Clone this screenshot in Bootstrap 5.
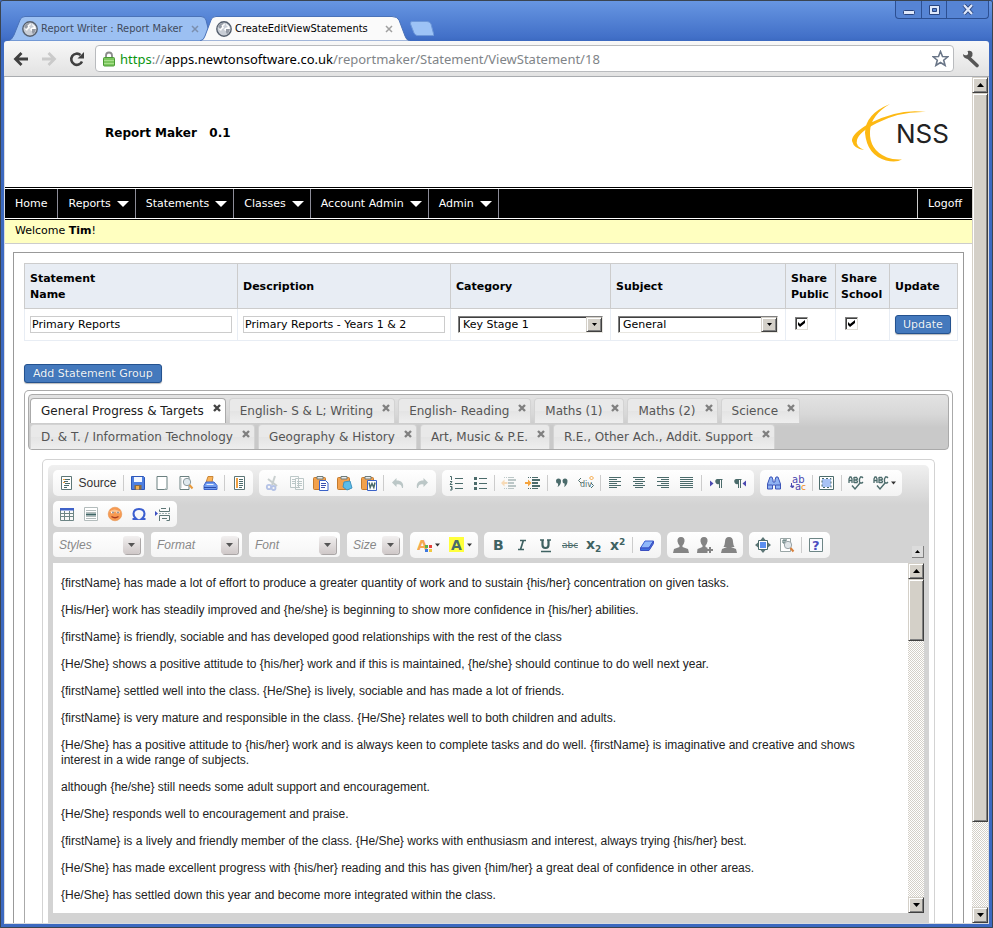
<!DOCTYPE html>
<html lang="en">
<head>
<meta charset="utf-8">
<meta name="viewport" content="width=device-width, initial-scale=1">
<title>CreateEditViewStatements</title>
<link href="https://cdn.jsdelivr.net/npm/bootstrap@5.3.0/dist/css/bootstrap.min.css" rel="stylesheet">
<style>
:root{--ui:"DejaVu Sans",Verdana,sans-serif;--narrow:"DejaVu Sans Condensed",Tahoma,sans-serif;--face:#d4d0c8}
body{font-family:var(--ui);font-size:11px;line-height:16px;color:#000;background:#3f6bc2}
button{color:inherit}
button svg{flex:none}
.win{border:1px solid #3a4450;border-radius:3px 3px 0 0}
.win-in{background:linear-gradient(#6796e2 0,#4270c8 36px,#3c69c0 40px);padding:0 3px 3px}
.titlebar{height:40px;padding:0 0 0 4px;flex:none}
.btab{position:relative;height:25px;border:0;background:none;font-family:var(--narrow);font-size:11px;line-height:16px;padding:0 9px 0 14px;text-align:left;gap:3px}
.btab svg.shape{position:absolute;inset:0;width:100%;height:100%}
.btab>:not(.shape){position:relative}
.btab-a{width:200px;color:#3f4a5c}
.btab-b{width:210px;margin-left:-8px;padding-left:16px;z-index:1}
.btab-t{white-space:nowrap}
.newtab{border:0;background:none;padding:0;margin-bottom:5px;line-height:0}
.winbtns{height:18px;border:1px solid #2c4f92;border-top:0;border-radius:0 0 4px 4px;overflow:hidden;background:#5684d4}
.winbtns button{border:0;border-left:1px solid #2c4f92;background:none;width:25px;padding:0;line-height:0}
.winbtns button:first-child{border-left:0}
.winbtns button:last-child{width:42px}
.navrow{height:36px;background:linear-gradient(#f8f8f8,#e2e2e2);border-bottom:1px solid #a9acb0;border-radius:3px 3px 0 0;padding:0 9px 0 3px}
.navrow button{border:0;background:none;padding:0;line-height:0;width:28px}
.omni{height:27px;background:#fff;border:1px solid #b9bbbe;border-radius:4px;padding:0 4px 0 6px;margin:0 8px 0 4px}
.url{font-family:"Noto Sans","Open Sans",sans-serif;font-size:13px;line-height:20px;color:#808488;text-decoration:none;white-space:nowrap}
.url b{font-weight:400;color:#0a9510}.url i{font-style:normal;color:#000}
.view{border:1px solid #d8dbe0;border-top:0;background:#fff;min-height:0}
.pane{min-width:0;overflow:hidden}
.sbar{width:16px;flex:none;background:repeating-conic-gradient(#d4d0c8 0 25%,#fff 0 50%) 0 0/2px 2px}
.raised{background:var(--face);border:1px solid;border-color:#d4d0c8 #404040 #404040 #d4d0c8;box-shadow:inset 1px 1px #fff,inset -1px -1px #808080}
.sbar button{height:16px;width:16px;padding:0;line-height:0;flex:none}
.thumb-lg{flex:729 1 0}.rest-lg{flex:85 1 0}
.thumb-sm{flex:60 1 0}.rest-sm{flex:258 1 0}
.mast{height:110px;padding:2px 20px 0 100px}
.mast h1{font-size:12px;line-height:16px;font-weight:700;margin:0}
.mast .brand{font-family:Inter,"DejaVu Sans",sans-serif;font-size:26px;font-weight:400}
.menu{border-top:1px solid #000;border-bottom:1px solid #000;padding:1px 0}
.menu-in{background:#000}
.menu a{color:#fff;text-decoration:none;padding:7px 10px 6px;height:29px;gap:6px;border-right:1px solid #8c8c98}
.menu a.drop{padding-right:6px}
.menu a.off{border-right:0;border-left:1px solid #ccc}
.hello{background:#ffffc0;border-bottom:1px solid #ccc;height:24px;padding:3px 10px}
.panel-main{border:1px solid #999;margin:8px 8px 0;padding:10px 8px 0 10px}
.grid-t{table-layout:fixed;width:100%;border-collapse:collapse}
.w-name{width:213px}.w-cat{width:160px}.w-subj{width:175px}.w-pub{width:50px}.w-sch{width:54px}.w-upd{width:68px}
.grid-t th{background:#e8edf4;border:1px solid #ccc;padding:7px 5px 5px;height:45px;vertical-align:middle;font-weight:700}
.grid-t td{border:1px solid #e8edf4;padding:6px 5px;height:32px;vertical-align:top}
.grid-t td.pick{padding:7px}
.txt{width:100%;height:17px;border:1px solid #ccc;padding:0 1px;font-size:11px;line-height:15px;display:block;color:#000;margin-top:1px}
.sel{position:relative;height:17px;border:1px solid;border-color:#808080 #e8e6e0 #e8e6e0 #808080;box-shadow:inset 1px 1px #404040}
.sel select{appearance:none;border:0;background:none;width:100%;height:15px;padding:0 18px 0 4px;font-size:11px;line-height:15px;display:block;outline:0}
.sel .raised{position:absolute;right:0;top:0;width:16px;height:15px;pointer-events:none;line-height:0}
.chk{appearance:none;display:block;width:13px;height:13px;margin:2px 0 0 4px;border:1px solid;border-color:#808080 #e0ddd6 #e0ddd6 #808080;box-shadow:inset 1px 1px #404040;background:#fff}
.chk:checked::before{content:"";display:block;width:7px;height:7px;margin:2px;background:#000;clip-path:polygon(0 28%,0 70%,29% 100%,100% 42%,100% 0,29% 58%)}
.cmd{background:#4479bd;border:1px solid #24528f;border-radius:3px;color:#eef4fb;font-size:11px;line-height:16px;padding:1px 7px;height:19px;box-shadow:0 1px 1px #bbb;text-shadow:0 0 1px #29558c;display:flex;align-items:center}
.cmd.add{margin-top:23px;padding:1px 8px}
.group-box{border:1px solid #aaa;border-radius:5px;margin-right:2px;padding:3px 3px 0;border-bottom:0;margin-top:7px}
.strip{border:1px solid #aaa;border-radius:4px;background:linear-gradient(#e2e2e2,#d8d8d8 35%,#c9c9c9 60%);padding:2px 1px 0}
.strip .rw{gap:3px;height:26px}
.tabx{height:25px;margin-top:1px;border:1px solid #d3d3d3;border-bottom:0;border-radius:4px 4px 0 0;background:linear-gradient(#e9e9e9 50%,#e4e4e4 50%,#eee);color:#555;font-size:12px}
.tabx a{color:inherit;text-decoration:none;padding:4px 0 0 10px;line-height:16px;white-space:nowrap}
.tabx button{border:0;background:none;padding:5px 4px 0 9px;line-height:0;color:#808080;align-self:flex-start}
.tabx.on{background:#fff;border-color:#aaa;color:#212121}.tabx.on button{color:#444}
.ed-out{border:1px solid #d3d3d3;border-radius:5px;margin:9px 14px 0;padding:5px;border-bottom:0}
.ed{background:linear-gradient(#f0f0f0,#d3d3d3 40px);border-radius:5px 5px 0 0;padding:5px 5px 20px}
.tools{gap:5px;margin-bottom:5px}
.tools .rw{gap:6px}
.tg{background:linear-gradient(#fff,#f3f3f3);border-radius:5px;padding:2px;height:26px}
.tg button{border:0;background:none;padding:0;height:22px;width:24px;display:flex;align-items:center;justify-content:center;font-family:"Liberation Sans",Arial,sans-serif;font-size:12px;line-height:16px;color:#333;gap:3px}
.tg button.wd{width:32px;gap:2px}
.tg button.src{width:66px}
.tg button:disabled{opacity:.35}
.sp{width:1px;height:16px;margin:0 2px;background:#ccc;align-self:center;flex:none}
.combo{height:25px;width:91px;border-radius:4px;border:0;background:linear-gradient(#fff,#f5f5f5);padding:0 4px 0 6px;font:italic 12px/16px "Liberation Sans",Arial,sans-serif;color:#888;margin-right:1px}
.combo.sz{width:56px}
.combo span{background:linear-gradient(#f2f0f0,#cfc8c8);border-radius:3px;width:17px;height:18px;box-shadow:1px 1px #aaa6a6}
.collapse-b{width:12px;height:12px;padding:0;border:0;border-right:1px solid #808080;border-bottom:1px solid #808080;background:#dcdcdc;line-height:0}
.doc{height:350px;background:#fff}
.doc-t{font:12px/15px "Liberation Sans",Arial,sans-serif;color:#222;padding:13px 20px 0 8px;overflow:hidden;outline:0}
.doc-t p{margin:0 0 12px}
svg text{font-family:var(--ui)}
</style>
<script src="https://cdn.jsdelivr.net/npm/bootstrap@5.3.0/dist/js/bootstrap.bundle.min.js"></script>
</head>
<body>
<svg width="0" height="0" class="position-absolute" aria-hidden="true">
<defs>
<g id="up"><path d="M3.500 0L7 4H0z" fill="#000"/></g>
<symbol id="globe" viewBox="0 0 16 16"><circle cx="8" cy="8" r="7.200" fill="#c9ced6" stroke="#56606e" stroke-width="1.400"/><path d="M2 6C3 3 5 1.500 8 2L9 4 7 5 8 7 6 8 5 10 3 8zM10 3l3 2 1 3-1 3-2 1-1-2-2-1 1-2 3-1-2-2z" fill="#fff"/><path d="M2 6C3 3 5 1.500 8 2L7 3.500 5.500 4 6 6 4 8zM10 8l4 0-1 3-2 2-1-2z" fill="#5c6675" opacity=".65"/></symbol>
<symbol id="page" viewBox="0 0 16 16"><path d="M3 1.500h10v13H3z" fill="#fff" stroke="#6b8080"/><path d="M10 14.500h3v-3z" fill="#b9c4c4"/></symbol>
<symbol id="source" viewBox="0 0 16 16"><path d="M2.500 1.500h10v13h-10z" fill="#fff" stroke="#5d7676"/><path d="M4 4.500h2M4 7.500h2" stroke="#f0a040"/><path d="M6 4.500h5M5 6.500h4M6 8.500h5M5 10.500h5M5 12.500h3" stroke="#4b6b6b"/></symbol>
<symbol id="save" viewBox="0 0 16 16"><path d="M1.500 1.500h12l1 1v12h-13z" fill="#4e7fe0" stroke="#2e57b8"/><path d="M4 2h8v5H4z" fill="#f4f8ff"/><path d="M4.500 10h7v4.500h-7z" fill="#8a6b40"/><path d="M6 11h3v3.500H6z" fill="#f3b050"/></symbol>
<symbol id="preview" viewBox="0 0 16 16"><path d="M2 1.500h9v13H2z" fill="#fff" stroke="#6b8080"/><path d="M3 3v10" stroke="#b8c2c2"/><circle cx="9" cy="7" r="3.700" fill="#dfe9ee" stroke="#8c9a9e"/><path d="M11.500 10l3 3.500" stroke="#e89a3c" stroke-width="2"/></symbol>
<symbol id="print" viewBox="0 0 16 16"><path d="M6 1.500h5l-1 6H4z" fill="#f9b35a" stroke="#c98636"/><path d="M4 7h8l3 3.500v4H2v-4z" fill="#6f9bf0" stroke="#3c62c8"/><path d="M2 12.500h12" stroke="#2b4ba8"/><path d="M4.500 9.500h7" stroke="#e8f0ff"/></symbol>
<symbol id="templates" viewBox="0 0 16 16"><path d="M3.500 1.500h10v13h-10z" fill="#fff" stroke="#5d7676"/><path d="M5 3h2v10H5z" fill="#f0a040"/><path d="M8 4.500h4M8 6.500h4M8 8.500h4M8 10.500h4M8 12.500h3" stroke="#4b6b6b"/></symbol>
<symbol id="cut" viewBox="0 0 16 16"><path d="M10 1L7 10M3 4l9 7" stroke="#6e8080" stroke-width="2" fill="none"/><circle cx="4" cy="12" r="2.200" fill="none" stroke="#3a62c8" stroke-width="1.800"/><circle cx="8.500" cy="13" r="2" fill="none" stroke="#3a62c8" stroke-width="1.800"/></symbol>
<symbol id="copy" viewBox="0 0 16 16"><path d="M1.500 1.500h8v11h-8zM6.500 3.500h8v11h-8z" fill="#fff" stroke="#4b6b6b"/><path d="M3 4.500h3M3 6.500h3M3 8.500h3M8 6.500h5M8 8.500h5M8 10.500h5M8 12.500h3" stroke="#4b6b6b"/></symbol>
<symbol id="clip" viewBox="0 0 16 16"><rect x=".500" y="2.500" width="12" height="12" rx="1" fill="#f3a14c" stroke="#c47a2c"/><path d="M4 1.500h6V4H4z" fill="#e8eaea" stroke="#6e7c7c"/></symbol>
<symbol id="paste" viewBox="0 0 16 16"><use href="#clip"/><path d="M6.500 5.500h6l2.500 2.500v7.500H6.500z" fill="#fff" stroke="#3a62c8"/><path d="M8 8.500h5M8 10.500h5M8 12.500h4" stroke="#3b4fae"/></symbol>
<symbol id="pastet" viewBox="0 0 16 16"><use href="#clip"/><path d="M7 7l6-1 2 7-5 2-4-3z" fill="#5bbce8" stroke="#3f93c0"/></symbol>
<symbol id="pastew" viewBox="0 0 16 16"><use href="#clip"/><path d="M6.500 5.500h9v10h-9z" fill="#fff" stroke="#3a62c8"/><path d="M8 7.500l1.200 5 1.800-4 1.800 4 1.200-5" fill="none" stroke="#4b6b6b" stroke-width="1.500"/></symbol>
<symbol id="undo" viewBox="0 0 16 16"><path d="M6.500 3L2 7.500 6.500 12V9.500c3-.5 5 0 5.500 3.500h1c1-5-1.500-7.500-6.500-7.500z" fill="#4b6b6b"/></symbol>
<symbol id="redo" viewBox="0 0 16 16"><path d="M9.500 3L14 7.500 9.500 12V9.500c-3-.5-5 0-5.500 3.500H3c-1-5 1.500-7.500 6.500-7.500z" fill="#4b6b6b"/></symbol>
<symbol id="ol" viewBox="0 0 16 16"><path d="M7 3.500h8M7 8.500h8M7 13.500h8M2 1.500h1.500V5M2 6.500h2L2 9.500h2.500M2 11.500h2v1.500H3h1v2H2" fill="none" stroke="#4b6b6b"/></symbol>
<symbol id="ul" viewBox="0 0 16 16"><path d="M7 3.500h8M7 8.500h8M7 13.500h8" stroke="#4b6b6b"/><path d="M2 2h3v3H2zM2 7h3v3H2zM2 12h3v3H2z" fill="#4b6b6b"/></symbol>
<symbol id="indent" viewBox="0 0 16 16"><path d="M3 2.500h5M3 13.500h5" stroke="#4b6b6b" stroke-dasharray="1 1"/><path d="M8 2.500h5M8 13.500h5" stroke="#4b6b6b"/><path d="M7 5h8M7 8h6M7 11h8" stroke="#4b6b6b" stroke-width="2"/><path d="M0 7h3V4.500L6.500 8 3 11.500V9H0z" fill="#f5a33c"/></symbol>
<symbol id="outdent" viewBox="0 0 16 16"><path d="M3 2.500h5M3 13.500h5" stroke="#4b6b6b" stroke-dasharray="1 1"/><path d="M8 2.500h5M8 13.500h5" stroke="#4b6b6b"/><path d="M7 5h8M7 8h6M7 11h8" stroke="#4b6b6b" stroke-width="2"/><path d="M6.500 7h-3V4.500L0 8l3.500 3.500V9h3z" fill="#f5a33c"/></symbol>
<symbol id="quote" viewBox="0 0 16 16"><path d="M2 6a2.500 2.500 0 1 1 5 0q0 4-3.500 6 1-2 .5-3.500Q2 8.500 2 6zM8.500 6a2.500 2.500 0 1 1 5 0q0 4-3.500 6 1-2 .5-3.500-2 0-2-2.500z" fill="#4b6b6b"/></symbol>
<symbol id="divi" viewBox="0 0 16 16"><path d="M3 3L.500 5.500 3 8M13 8l2.500 2.500L13 13" fill="none" stroke="#4b6b6b"/><text x="2" y="12" font-size="8" fill="#4b6b6b">div</text><path d="M13.500 1l2 2-2 2-2-2z" fill="none" stroke="#f5a33c"/></symbol>
<symbol id="al" viewBox="0 0 16 16"><path d="M2 2.500h12M2 4.500h8M2 6.500h12M2 8.500h8M2 10.500h12M2 12.500h8" stroke="#4b6b6b"/></symbol>
<symbol id="ac" viewBox="0 0 16 16"><path d="M2 2.500h12M4 4.500h8M2 6.500h12M4 8.500h8M2 10.500h12M4 12.500h8" stroke="#4b6b6b"/></symbol>
<symbol id="ar" viewBox="0 0 16 16"><path d="M2 2.500h12M6 4.500h8M2 6.500h12M6 8.500h8M2 10.500h12M6 12.500h8" stroke="#4b6b6b"/></symbol>
<symbol id="aj" viewBox="0 0 16 16"><path d="M1 2.500h13M1 4.500h13M1 6.500h13M1 8.500h13M1 10.500h13M1 12.500h13" stroke="#4b6b6b"/></symbol>
<symbol id="ltr" viewBox="0 0 16 16"><path d="M2 5.500L5.500 8.500 2 11.500z" fill="#4a48b0"/><path d="M9 4h5.500v1H14v8h-1V5h-1v8h-1V9a2.500 2.500 0 0 1-2-5z" fill="#4b6b6b"/></symbol>
<symbol id="rtl" viewBox="0 0 16 16"><path d="M14 5.500L10.500 8.500 14 11.500z" fill="#4a48b0"/><path d="M4 4h5.500v1H9v8H8V5H7v8H6V9a2.500 2.500 0 0 1-2-5z" fill="#4b6b6b"/></symbol>
<symbol id="find" viewBox="0 0 16 16"><path d="M4 2h2l1 3v2h2V5l1-3h2l2.500 7v5H9.500v-4h-3v4h-5V9z" fill="#8fb2f2" stroke="#3c55b8"/><path d="M2 10h4M10 10h4" stroke="#3c55b8"/></symbol>
<symbol id="repl" viewBox="0 0 16 16"><text x="2" y="8" font-size="10" fill="#4a48b0">ab</text><text x="5" y="15" font-size="10" fill="#4a48b0">a</text><text x="11" y="15" font-size="9" fill="#f08a20">c</text><path d="M1.500 8v3M.500 11h3.500L2.500 13z" stroke="#4a48b0" fill="#4a48b0"/></symbol>
<symbol id="selall" viewBox="0 0 16 16"><path d="M.500 1.500h14v13H.5z" fill="#fff" stroke="#4b6b6b"/><path d="M3 4h9v8H3z" fill="#a9c3f5"/><path d="M3 3.500h9v9H3z" fill="none" stroke="#4b6b6b" stroke-dasharray="2 2"/></symbol>
<symbol id="spell" viewBox="0 0 16 16"><path d="M1 8V4l1-2h1l1 2v4M1 5.500h3M6 2v6M6 2.500h2.500L9.500 4 8 5H6m2 0l1.500 1L9 7.500H6M15 3l-1-1h-1.500L11.500 4v3l1 1H14l1-1" fill="none" stroke="#4b6b6b" stroke-width="1.300"/><path d="M4 10.500l3 3.500 5-6" fill="none" stroke="#4b6b6b" stroke-width="1.400"/></symbol>
<symbol id="table" viewBox="0 0 16 16"><path d="M1.500 2.500h13v12h-13zM1 7.500h14M1 10.500h14M5.500 5v9M10.500 5v9" fill="none" stroke="#6d8585"/><path d="M1 2h14v2.500H1z" fill="#3f62c8"/></symbol>
<symbol id="hr" viewBox="0 0 16 16"><path d="M1.500 1.500h13v13h-13z" fill="#fff" stroke="#b3bcbc"/><path d="M3 4.500h10M3 6.500h10M3 10.500h10M3 12.500h10" stroke="#b3bcbc"/><path d="M3 8.500h10" stroke="#3f6464" stroke-width="2"/></symbol>
<symbol id="smile" viewBox="0 0 16 16"><circle cx="8" cy="8" r="6.800" fill="#f79a52" stroke="#e08a40" stroke-width=".500"/><path d="M2 6q5-5 12 0z" fill="#fbc28e"/><path d="M4 6.500h3M9.500 6.500h3" stroke="#fff" stroke-width="1.500"/><path d="M5.500 6.500h1M10.500 6.500h1" stroke="#333" stroke-width="1.500"/><path d="M4.500 10.500q3.500 2.500 7 0" stroke="#a83c20" stroke-width="1.300" fill="none"/></symbol>
<symbol id="omega" viewBox="0 0 16 16"><path d="M1.500 13H5.500Q2.500 11 2.500 7.500 3 3 8 3t5.500 4.500Q13.500 11 10.500 13h4" fill="none" stroke="#3c5fd0" stroke-width="2"/></symbol>
<symbol id="brk" viewBox="0 0 16 16"><path d="M4.500 3.500v2h10v-4M4.500 15V9.500h10v5h-3M6 2.500h5M7 12.500h5" fill="none" stroke="#5d7676"/><path d="M4 7.500h11" stroke="#9fb0b0" stroke-dasharray="2 1"/><path d="M0 5l3 2.500L0 10z" fill="#3c4fc0"/></symbol>
<symbol id="fcol" viewBox="0 0 16 16"><text x="0" y="13" font-size="14" font-weight="700" fill="#f5a850">A</text><path d="M8 8h3v3H8z" fill="#5bb04a"/><path d="M12 8h3v3h-3z" fill="#e8403c"/><path d="M8 12h3v3H8z" fill="#3c78e0"/><path d="M12 12h3v3h-3z" fill="#f0c840"/></symbol>
<symbol id="bcol" viewBox="0 0 16 16"><path d="M0 0h15v15H0z" fill="#ffff3c"/><text x="2" y="13" font-size="14" font-weight="700" fill="#4b6b6b">A</text></symbol>
<symbol id="dn" viewBox="0 0 5 16"><path d="M0 6.500h5L2.500 9.500z" fill="#333"/></symbol>
<symbol id="b" viewBox="0 0 16 16"><text x="3" y="13" font-size="14" font-weight="700" fill="#3f6262">B</text></symbol>
<symbol id="i" viewBox="0 0 16 16"><path d="M6 3.500h6M4 12.500h6M9.500 3L6.500 12.500" fill="none" stroke="#3f6262" stroke-width="1.700"/></symbol>
<symbol id="u" viewBox="0 0 16 16"><path d="M2 3h4M9 3h4" stroke="#3f6262" stroke-width="1.500"/><path d="M4.500 3v5q0 3 3 3t3-3V3" fill="none" stroke="#3f6262" stroke-width="2.200"/><path d="M3 14.500h10" stroke="#3f6262" stroke-width="1.500"/></symbol>
<symbol id="s" viewBox="0 0 16 16"><text x="0" y="11" font-size="9" fill="#4b6b6b">abc</text><path d="M0 8.500h16" stroke="#4b6b6b"/></symbol>
<symbol id="sub" viewBox="0 0 16 16"><text x="0" y="12" font-size="14" font-weight="700" fill="#3f6262">x</text><text x="9" y="15" font-size="9" font-weight="700" fill="#3f6262">2</text></symbol>
<symbol id="sup" viewBox="0 0 16 16"><text x="0" y="13" font-size="14" font-weight="700" fill="#3f6262">x</text><text x="9" y="8" font-size="9" font-weight="700" fill="#3f6262">2</text></symbol>
<symbol id="erase" viewBox="0 0 16 16"><path d="M6 4h8.500L10 11H1.500z" fill="#8fb8fa" stroke="#3c5fd0"/><path d="M1.500 11H10l4.500-7v2.500L10 13.500H1.500z" fill="#3f6fe0" stroke="#3c4fc0"/></symbol>
<symbol id="man" viewBox="0 0 16 16"><path d="M8 0q4 0 3.500 4.500Q11 7 9.500 8.500V10l5.500 2 1 4H0l1-4 5.500-2V8.500Q5 7 4.500 4.500 4 0 8 0z" fill="#848484"/></symbol>
<symbol id="manp" viewBox="0 0 16 16"><path d="M7 0q4 0 3.500 4.500Q10 7 8.500 8.500V10l2 .8V16H0l.5-4L5.500 10V8.500Q4 7 3.500 4.500 3 0 7 0z" fill="#848484"/><path d="M13 10v6M10 13h6" stroke="#848484" stroke-width="2"/></symbol>
<symbol id="woman" viewBox="0 0 16 16"><path d="M8 0q4 0 4 5 .3 3.500 1.500 5H10l5 2 1 4H0l1-4 5-2H2.500Q3.700 8.500 4 5q0-5 4-5z" fill="#848484"/></symbol>
<symbol id="max" viewBox="0 0 16 16"><path d="M3.500 3.500h9v9h-9z" fill="#fff" stroke="#4b6b6b"/><path d="M5 5h6v6H5z" fill="#5a8ff0"/><path d="M8 0l2.500 3h-5zM8 16l2.500-3h-5zM0 8l3-2.500v5zM16 8l-3-2.500v5z" fill="#5d7676"/></symbol>
<symbol id="blocks" viewBox="0 0 16 16"><path d="M1.500 1.500h10v13h-10z" fill="#fff" stroke="#9aa6a6"/><path d="M4 3h4M4 3v3h2M6 3v5" stroke="#4b6b6b" fill="none"/><circle cx="9" cy="8" r="3.700" fill="#dfe5e8" stroke="#9aa4a8"/><path d="M11.500 11l3 3.500" stroke="#d8803c" stroke-width="2"/></symbol>
<symbol id="help" viewBox="0 0 16 16"><path d="M1.500 1.500h13v13h-13z" fill="#f8fbff" stroke="#6d8585"/><text x="4" y="13" font-size="13" font-weight="700" fill="#4a4cc0">?</text></symbol>
<symbol id="x" viewBox="0 0 8 8"><path d="M1 1l6 6M7 1L1 7" stroke="currentColor" stroke-width="2.400"/></symbol>
</defs>
</svg>

<div class="win vh-100 d-flex flex-column overflow-hidden">
<div class="win-in flex-fill d-flex flex-column overflow-hidden">
  <header class="titlebar d-flex justify-content-between align-items-start">
    <div class="d-flex align-items-end h-100">
      <button class="btab btab-a d-flex align-items-center" type="button">
        <svg class="shape" viewBox="0 0 200 25" preserveAspectRatio="none"><path d="M0 25Q4 24 6 19L12 4Q13 .5 17 .5H193Q197 .5 198 4L200 12V25z" fill="#9cc0f2" stroke="#4a72b8"/></svg>
        <svg width="16" height="16"><use href="#globe"/></svg>
        <span class="btab-t flex-fill">Report Writer : Report Maker</span>
        <svg width="8" height="8" fill="none" stroke="#7b8fae" stroke-width="1.500"><path d="M1 1l6 6M7 1L1 7"/></svg>
      </button>
      <button class="btab btab-b d-flex align-items-center" type="button">
        <svg class="shape" viewBox="0 0 210 25" preserveAspectRatio="none"><path d="M0 25Q4 24 5 20L11 4Q12 .5 16 .5H192Q197 .5 199 4L205 20Q206 24 210 25z" fill="#fafafa" stroke="#4a72b8"/></svg>
        <svg width="16" height="16"><use href="#globe"/></svg>
        <span class="btab-t flex-fill">CreateEditViewStatements</span>
        <svg class="me-2" width="8" height="8" fill="none" stroke="#a0a0a0" stroke-width="1.500"><path d="M1 1l6 6M7 1L1 7"/></svg>
      </button>
      <button class="newtab" type="button" aria-label="New tab"><svg width="24" height="15"><path d="M2 .5H17Q20 .5 21 3L24 14.500H7Q5 14 4 12L.5 3Q0 .5 2 .5z" fill="#9dc3f6" stroke="#6d97d8"/></svg></button>
    </div>
    <div class="winbtns d-flex align-items-stretch">
      <button type="button" aria-label="Minimize"><svg width="12" height="12"><rect x=".500" y="6.500" width="11" height="4" rx="1" fill="#dfe8fa" stroke="#2a4580"/></svg></button>
      <button type="button" aria-label="Maximize"><svg width="13" height="12"><path d="M1.500 1.500h10v9h-10z" fill="#dfe8fa" stroke="#2a4580"/><path d="M4.500 4.500h4v3h-4z" fill="#5684d4" stroke="#2a4580"/></svg></button>
      <button type="button" aria-label="Close"><svg width="12" height="11"><path d="M2 1l8 9M10 1L2 10" stroke="#2a4580" stroke-width="4"/><path d="M2 1l8 9M10 1L2 10" stroke="#dfe8fa" stroke-width="2.200"/></svg></button>
    </div>
  </header>

  <div class="navrow d-flex align-items-center flex-shrink-0">
    <button type="button" aria-label="Back"><svg width="16" height="16"><path d="M8.500 2L2.500 8l6 6M3 8h12" fill="none" stroke="#404040" stroke-width="2.800"/></svg></button>
    <button type="button" aria-label="Forward"><svg width="16" height="16"><path d="M7.500 2l6 6-6 6M13 8H1" fill="none" stroke="#cacaca" stroke-width="2.800"/></svg></button>
    <button type="button" aria-label="Reload"><svg width="16" height="16"><path d="M13 10.500A5.600 5.600 0 1 1 11.500 4" fill="none" stroke="#404040" stroke-width="2.600"/><path d="M15 1v6.500H8.500z" fill="#404040"/></svg></button>
    <div class="omni d-flex align-items-center flex-fill overflow-hidden">
      <svg class="me-1 flex-shrink-0" width="14" height="16"><path d="M4 7V4.500a3 3 0 0 1 6 0V7" fill="none" stroke="#8b8b8b" stroke-width="1.800"/><rect x="1.500" y="6.500" width="11" height="8.500" rx="1" fill="#7dc75f" stroke="#4a9a34"/><path d="M2 9.500h10M2 12.500h10" stroke="#a8e08c"/></svg>
      <a class="url flex-fill" href="#"><b>https</b>://<i>apps.newtonsoftware.co.uk</i>/reportmaker/Statement/ViewStatement/18</a>
      <svg class="flex-shrink-0" width="17" height="17"><path d="M8.500 1.500l2 5 5.300.3-4.100 3.400 1.400 5.200-4.600-2.900-4.600 2.900 1.400-5.200L1.200 6.800l5.300-.3z" fill="none" stroke="#6a7688" stroke-width="1.600"/></svg>
    </div>
    <svg class="flex-shrink-0" width="18" height="18"><path d="M7 8l8 7.500" stroke="#565656" stroke-width="3.600" stroke-linecap="round"/><path d="M1 4q2 2 4 1t.5-4q4-1 5 2 .5 3-1.500 4.500Q6 9.500 4 8.500 1 7.500 1 4z" fill="#565656"/></svg>
  </div>

  <div class="view flex-fill d-flex overflow-hidden">
    <main class="pane flex-fill">
      <div class="mast d-flex align-items-center justify-content-between">
        <h1>Report Maker &nbsp;&nbsp;0.1</h1>
        <svg width="102" height="60" viewBox="0 0 102 60"><path d="M40 1Q15 11 15 30 17 52 36 57.500q10 2.500 16-1-9 .5-15-2Q19 47 20 28 21 12 40 1z" fill="#fdb913"/><path d="M76 9Q50 5 20 20 1 31 2 38q2 8 12 9-9-4-7-10 2-8 20-17Q50 8 76 9z" fill="#fdb913"/><text class="brand" x="46" y="40" fill="#222">NSS</text></svg>
      </div>
      <nav class="menu"><div class="menu-in d-flex">
        <a class="d-flex align-items-center" href="#">Home</a>
        <a class="drop d-flex align-items-center" href="#">Reports<svg width="12" height="6"><path d="M0 0h12L6 6z" fill="#fff"/></svg></a>
        <a class="drop d-flex align-items-center" href="#">Statements<svg width="12" height="6"><path d="M0 0h12L6 6z" fill="#fff"/></svg></a>
        <a class="drop d-flex align-items-center" href="#">Classes<svg width="12" height="6"><path d="M0 0h12L6 6z" fill="#fff"/></svg></a>
        <a class="drop d-flex align-items-center" href="#">Account Admin<svg width="12" height="6"><path d="M0 0h12L6 6z" fill="#fff"/></svg></a>
        <a class="drop d-flex align-items-center" href="#">Admin<svg width="12" height="6"><path d="M0 0h12L6 6z" fill="#fff"/></svg></a>
        <a class="off ms-auto d-flex align-items-center" href="#">Logoff</a>
      </div></nav>
      <div class="hello">Welcome <b>Tim</b>!</div>

      <section class="panel-main">
        <table class="grid-t">
          <colgroup><col class="w-name"><col class="w-name"><col class="w-cat"><col class="w-subj"><col class="w-pub"><col class="w-sch"><col class="w-upd"></colgroup>
          <thead><tr><th>Statement<br>Name</th><th>Description</th><th>Category</th><th>Subject</th><th>Share Public</th><th>Share School</th><th>Update</th></tr></thead>
          <tbody><tr>
            <td><input class="txt" type="text" value="Primary Reports" aria-label="Statement Name"></td>
            <td><input class="txt" type="text" value="Primary Reports - Years 1 &amp; 2" aria-label="Description"></td>
            <td class="pick"><div class="sel"><select aria-label="Category"><option>Key Stage 1</option></select><span class="raised d-flex align-items-center justify-content-center"><svg width="5" height="3"><path d="M0 0h5L2.500 3z"/></svg></span></div></td>
            <td class="pick"><div class="sel"><select aria-label="Subject"><option>General</option></select><span class="raised d-flex align-items-center justify-content-center"><svg width="5" height="3"><path d="M0 0h5L2.500 3z"/></svg></span></div></td>
            <td><input class="chk" type="checkbox" checked aria-label="Share Public"></td>
            <td><input class="chk" type="checkbox" checked aria-label="Share School"></td>
            <td><button class="cmd" type="button">Update</button></td>
          </tr></tbody>
        </table>

        <button class="cmd add" type="button">Add Statement Group</button>

        <div class="group-box">
          <div class="strip">
            <div class="rw d-flex">
              <div class="tabx on d-flex"><a href="#">General Progress &amp; Targets</a><button type="button" aria-label="Remove"><svg width="8" height="8"><use href="#x"/></svg></button></div>
              <div class="tabx d-flex"><a href="#">English- S &amp; L; Writing</a><button type="button" aria-label="Remove"><svg width="8" height="8"><use href="#x"/></svg></button></div>
              <div class="tabx d-flex"><a href="#">English- Reading</a><button type="button" aria-label="Remove"><svg width="8" height="8"><use href="#x"/></svg></button></div>
              <div class="tabx d-flex"><a href="#">Maths (1)</a><button type="button" aria-label="Remove"><svg width="8" height="8"><use href="#x"/></svg></button></div>
              <div class="tabx d-flex"><a href="#">Maths (2)</a><button type="button" aria-label="Remove"><svg width="8" height="8"><use href="#x"/></svg></button></div>
              <div class="tabx d-flex"><a href="#">Science</a><button type="button" aria-label="Remove"><svg width="8" height="8"><use href="#x"/></svg></button></div>
            </div>
            <div class="rw d-flex">
              <div class="tabx d-flex"><a href="#">D. &amp; T. / Information Technology</a><button type="button" aria-label="Remove"><svg width="8" height="8"><use href="#x"/></svg></button></div>
              <div class="tabx d-flex"><a href="#">Geography &amp; History</a><button type="button" aria-label="Remove"><svg width="8" height="8"><use href="#x"/></svg></button></div>
              <div class="tabx d-flex"><a href="#">Art, Music &amp; P.E.</a><button type="button" aria-label="Remove"><svg width="8" height="8"><use href="#x"/></svg></button></div>
              <div class="tabx d-flex"><a href="#">R.E., Other Ach., Addit. Support</a><button type="button" aria-label="Remove"><svg width="8" height="8"><use href="#x"/></svg></button></div>
            </div>
          </div>

          <div class="ed-out"><div class="ed">
            <div class="tools d-flex flex-column">
              <div class="rw d-flex">
                <div class="tg d-flex"><button class="src" type="button"><svg width="16" height="16"><use href="#source"/></svg>Source</button><i class="sp"></i><button type="button" aria-label="Save"><svg width="16" height="16"><use href="#save"/></svg></button><button type="button" aria-label="New page"><svg width="16" height="16"><use href="#page"/></svg></button><button type="button" aria-label="Preview"><svg width="16" height="16"><use href="#preview"/></svg></button><button type="button" aria-label="Print"><svg width="16" height="16"><use href="#print"/></svg></button><i class="sp"></i><button type="button" aria-label="Templates"><svg width="16" height="16"><use href="#templates"/></svg></button></div>
                <div class="tg d-flex"><button type="button" disabled aria-label="Cut"><svg width="16" height="16"><use href="#cut"/></svg></button><button type="button" disabled aria-label="Copy"><svg width="16" height="16"><use href="#copy"/></svg></button><button type="button" aria-label="Paste"><svg width="16" height="16"><use href="#paste"/></svg></button><button type="button" aria-label="Paste as text"><svg width="16" height="16"><use href="#pastet"/></svg></button><button type="button" aria-label="Paste from Word"><svg width="16" height="16"><use href="#pastew"/></svg></button><i class="sp"></i><button type="button" disabled aria-label="Undo"><svg width="16" height="16"><use href="#undo"/></svg></button><button type="button" disabled aria-label="Redo"><svg width="16" height="16"><use href="#redo"/></svg></button></div>
                <div class="tg d-flex"><button type="button" aria-label="Numbered list"><svg width="16" height="16"><use href="#ol"/></svg></button><button type="button" aria-label="Bulleted list"><svg width="16" height="16"><use href="#ul"/></svg></button><i class="sp"></i><button type="button" disabled aria-label="Outdent"><svg width="16" height="16"><use href="#outdent"/></svg></button><button type="button" aria-label="Indent"><svg width="16" height="16"><use href="#indent"/></svg></button><i class="sp"></i><button type="button" aria-label="Block quote"><svg width="16" height="16"><use href="#quote"/></svg></button><button type="button" aria-label="Div container"><svg width="16" height="16"><use href="#divi"/></svg></button><i class="sp"></i><button type="button" aria-label="Align left"><svg width="16" height="16"><use href="#al"/></svg></button><button type="button" aria-label="Center"><svg width="16" height="16"><use href="#ac"/></svg></button><button type="button" aria-label="Align right"><svg width="16" height="16"><use href="#ar"/></svg></button><button type="button" aria-label="Justify"><svg width="16" height="16"><use href="#aj"/></svg></button><i class="sp"></i><button type="button" aria-label="Left to right"><svg width="16" height="16"><use href="#ltr"/></svg></button><button type="button" aria-label="Right to left"><svg width="16" height="16"><use href="#rtl"/></svg></button></div>
                <div class="tg d-flex"><button type="button" aria-label="Find"><svg width="16" height="16"><use href="#find"/></svg></button><button type="button" aria-label="Replace"><svg width="16" height="16"><use href="#repl"/></svg></button><i class="sp"></i><button type="button" aria-label="Select all"><svg width="16" height="16"><use href="#selall"/></svg></button><i class="sp"></i><button type="button" aria-label="Check spelling"><svg width="16" height="16"><use href="#spell"/></svg></button><button class="wd" type="button" aria-label="Spell check as you type"><svg width="16" height="16"><use href="#spell"/></svg><svg width="5" height="16"><use href="#dn"/></svg></button></div>
              </div>
              <div class="rw d-flex">
                <div class="tg d-flex"><button type="button" aria-label="Table"><svg width="16" height="16"><use href="#table"/></svg></button><button type="button" aria-label="Horizontal line"><svg width="16" height="16"><use href="#hr"/></svg></button><button type="button" aria-label="Smiley"><svg width="16" height="16"><use href="#smile"/></svg></button><button type="button" aria-label="Special character"><svg width="16" height="16"><use href="#omega"/></svg></button><button type="button" aria-label="Page break"><svg width="16" height="16"><use href="#brk"/></svg></button></div>
              </div>
              <div class="rw d-flex">
                <button class="combo d-flex align-items-center justify-content-between" type="button">Styles<span class="d-flex align-items-center justify-content-center"><svg width="7" height="4"><path d="M0 0h7L3.500 4z" fill="#555"/></svg></span></button>
                <button class="combo d-flex align-items-center justify-content-between" type="button">Format<span class="d-flex align-items-center justify-content-center"><svg width="7" height="4"><path d="M0 0h7L3.500 4z" fill="#555"/></svg></span></button>
                <button class="combo d-flex align-items-center justify-content-between" type="button">Font<span class="d-flex align-items-center justify-content-center"><svg width="7" height="4"><path d="M0 0h7L3.500 4z" fill="#555"/></svg></span></button>
                <button class="combo sz d-flex align-items-center justify-content-between" type="button">Size<span class="d-flex align-items-center justify-content-center"><svg width="7" height="4"><path d="M0 0h7L3.500 4z" fill="#555"/></svg></span></button>
                <div class="tg d-flex"><button class="wd" type="button" aria-label="Text colour"><svg width="16" height="16"><use href="#fcol"/></svg><svg width="5" height="16"><use href="#dn"/></svg></button><button class="wd" type="button" aria-label="Background colour"><svg width="16" height="16"><use href="#bcol"/></svg><svg width="5" height="16"><use href="#dn"/></svg></button></div>
                <div class="tg d-flex"><button type="button" aria-label="Bold"><svg width="16" height="16"><use href="#b"/></svg></button><button type="button" aria-label="Italic"><svg width="16" height="16"><use href="#i"/></svg></button><button type="button" aria-label="Underline"><svg width="16" height="16"><use href="#u"/></svg></button><button type="button" aria-label="Strike through"><svg width="16" height="16"><use href="#s"/></svg></button><button type="button" aria-label="Subscript"><svg width="16" height="16"><use href="#sub"/></svg></button><button type="button" aria-label="Superscript"><svg width="16" height="16"><use href="#sup"/></svg></button><i class="sp"></i><button type="button" aria-label="Remove format"><svg width="16" height="16"><use href="#erase"/></svg></button></div>
                <div class="tg d-flex"><button type="button" aria-label="He or she"><svg width="16" height="16"><use href="#man"/></svg></button><button type="button" aria-label="First name"><svg width="16" height="16"><use href="#manp"/></svg></button><button type="button" aria-label="His or her"><svg width="16" height="16"><use href="#woman"/></svg></button></div>
                <div class="tg d-flex"><button type="button" aria-label="Maximize editor"><svg width="16" height="16"><use href="#max"/></svg></button><button type="button" aria-label="Show blocks"><svg width="16" height="16"><use href="#blocks"/></svg></button><i class="sp"></i><button type="button" aria-label="About"><svg width="16" height="16"><use href="#help"/></svg></button></div>
                <button class="collapse-b ms-auto align-self-end" type="button" aria-label="Collapse toolbar"><svg width="5" height="3"><path d="M2.500 0L5 3H0z"/></svg></button>
              </div>
            </div>
            <div class="doc d-flex">
              <div class="doc-t flex-fill" contenteditable="true" spellcheck="false">
                <p>{firstName} has made a lot of effort to produce a greater quantity of work and to sustain {his/her} concentration on given tasks.</p>
                <p>{His/Her} work has steadily improved and {he/she} is beginning to show more confidence in {his/her} abilities.</p>
                <p>{firstName} is friendly, sociable and has developed good relationships with the rest of the class</p>
                <p>{He/She} shows a positive attitude to {his/her} work and if this is maintained, {he/she} should continue to do well next year.</p>
                <p>{firstName} settled well into the class. {He/She} is lively, sociable and has made a lot of friends.</p>
                <p>{firstName} is very mature and responsible in the class. {He/She} relates well to both children and adults.</p>
                <p>{He/She} has a positive attitude to {his/her} work and is always keen to complete tasks and do well. {firstName} is imaginative and creative and shows interest in a wide range of subjects.</p>
                <p>although {he/she} still needs some adult support and encouragement.</p>
                <p>{He/She} responds well to encouragement and praise.</p>
                <p>{firstName} is a lively and friendly member of the class. {He/She} works with enthusiasm and interest, always trying {his/her} best.</p>
                <p>{He/She} has made excellent progress with {his/her} reading and this has given {him/her} a great deal of confidence in other areas.</p>
                <p>{He/She} has settled down this year and become more integrated within the class.</p>
              </div>
              <div class="sbar d-flex flex-column">
                <button class="raised" type="button" aria-label="Scroll up"><svg width="7" height="4"><use href="#up"/></svg></button>
                <div class="raised thumb-sm"></div><div class="rest-sm"></div>
                <button class="raised" type="button" aria-label="Scroll down"><svg width="7" height="4"><path d="M0 0h7L3.500 4z"/></svg></button>
              </div>
            </div>
          </div></div>
        </div>
      </section>
    </main>
    <div class="sbar d-flex flex-column">
      <button class="raised" type="button" aria-label="Page up"><svg width="7" height="4"><use href="#up"/></svg></button>
      <div class="raised thumb-lg"></div><div class="rest-lg"></div>
      <button class="raised" type="button" aria-label="Page down"><svg width="7" height="4"><path d="M0 0h7L3.500 4z"/></svg></button>
    </div>
  </div>
</div>
</div>
</body>
</html>
